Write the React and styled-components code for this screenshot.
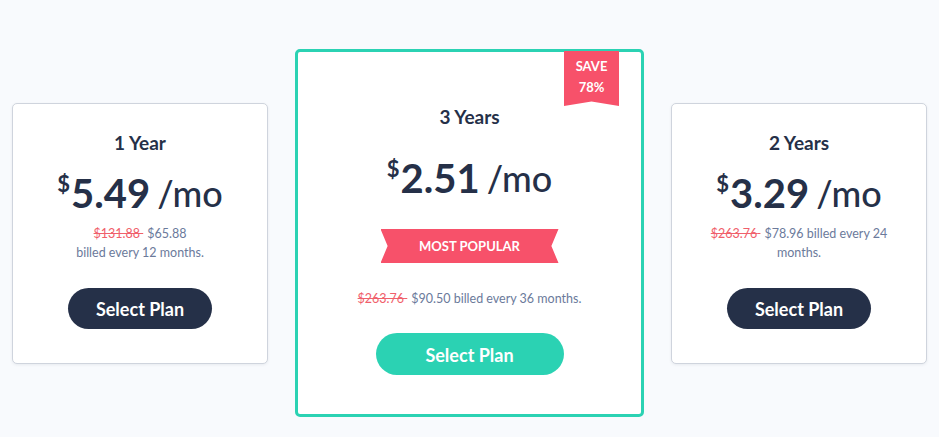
import React from "react";
import styled, { createGlobalStyle, css } from "styled-components";

const GlobalStyle = createGlobalStyle`
  html, body {
    margin: 0;
    padding: 0;
    background: #f8fafd;
  }
  body {
    font-family: Lato, "Open Sans", Arial, sans-serif;
    color: #253048;
  }
`;

const Page = styled.div`
  width: 939px;
  height: 437px;
  box-sizing: border-box;
  padding: 29px 12px 0;
  display: flex;
  align-items: center;
  justify-content: space-between;
  gap: 27px;
`;

const Card = styled.div`
  position: relative;
  box-sizing: border-box;
  background: #ffffff;
  border-radius: 5px;
  display: flex;
  flex-direction: column;
  align-items: center;
  text-align: center;

  ${({ $featured }) =>
    $featured
      ? css`
          width: 349px;
          height: 368px;
          border: 3px solid #2bd2b3;
          padding-top: 53px;
        `
      : css`
          width: 256px;
          height: 261px;
          border: 1px solid #cfd4dd;
          box-shadow: 0 1px 3px rgba(37, 48, 72, 0.08);
          padding-top: 27px;
        `}
`;

const Title = styled.h3`
  margin: 0;
  font-size: 19px;
  line-height: 24px;
  font-weight: 700;
  color: #253048;
`;

const Price = styled.div`
  display: flex;
  align-items: flex-start;
  justify-content: center;
  height: 48px;
  line-height: 48px;
  margin-top: ${({ $featured }) => ($featured ? "25px" : "14px")};
  color: #253048;
  white-space: nowrap;
`;

const Currency = styled.span`
  font-size: 22px;
  line-height: 30px;
  font-weight: 700;
  margin-right: 1px;
`;

const Amount = styled.span`
  font-size: 40px;
  font-weight: 700;
`;

const Per = styled.span`
  font-size: 36px;
  font-weight: 500;
  margin-left: 7px;
`;

const Billing = styled.p`
  margin: ${({ $featured }) => ($featured ? "26px 0 0" : "7px 0 0")};
  max-width: ${({ $featured }) => ($featured ? "none" : "190px")};
  font-size: 12.5px;
  line-height: 19px;
  color: #6b7a9b;
`;

const OldPrice = styled.s`
  color: #f0606b;
  margin-right: 4px;
`;

const SelectButton = styled.button`
  margin-top: ${({ $featured }) => ($featured ? "25px" : "26px")};
  width: ${({ $featured }) => ($featured ? "188px" : "144px")};
  height: ${({ $featured }) => ($featured ? "42px" : "41px")};
  padding: 2px 0 0;
  border: none;
  border-radius: 21px;
  background: ${({ $featured }) => ($featured ? "#2bd2b3" : "#253048")};
  color: #ffffff;
  font-family: Lato, "Open Sans", Arial, sans-serif;
  font-size: 18px;
  font-weight: 700;
  cursor: pointer;
`;

const SaveRibbon = styled.div`
  position: absolute;
  top: -1px;
  right: 22px;
  width: 55px;
  height: 55px;
  padding-top: 5px;
  box-sizing: border-box;
  background: #f7516a;
  color: #ffffff;
  font-size: 13px;
  line-height: 21px;
  font-weight: 700;
  clip-path: polygon(0 0, 100% 0, 100% 100%, 50% 92%, 0 100%);
`;

const PopularBanner = styled.div`
  margin-top: 27px;
  width: 178px;
  height: 34px;
  line-height: 34px;
  background: #f7516a;
  color: #ffffff;
  font-size: 13px;
  font-weight: 700;
  clip-path: polygon(0 0, 100% 0, 96% 50%, 100% 100%, 0 100%, 4% 50%);
`;

const plans = [
  {
    id: "1y",
    title: "1 Year",
    amount: "5.49",
    old: "$131.88",
    total: "$65.88",
    rest: "billed every 12 months.",
    breakLine: true,
  },
  {
    id: "3y",
    title: "3 Years",
    amount: "2.51",
    old: "$263.76",
    total: "$90.50",
    rest: "billed every 36 months.",
    featured: true,
  },
  {
    id: "2y",
    title: "2 Years",
    amount: "3.29",
    old: "$263.76",
    total: "$78.96",
    rest: "billed every 24 months.",
  },
];

const PlanCard = ({ plan }) => {
  const { featured } = plan;

  return (
    <Card $featured={featured}>
      {featured && (
        <SaveRibbon>
          SAVE
          <br />
          78%
        </SaveRibbon>
      )}
      <Title>{plan.title}</Title>
      <Price $featured={featured}>
        <Currency>$</Currency>
        <Amount>{plan.amount}</Amount>
        <Per>/mo</Per>
      </Price>
      {featured && <PopularBanner>MOST POPULAR</PopularBanner>}
      <Billing $featured={featured}>
        <OldPrice>{plan.old} </OldPrice>
        {plan.total}
        {plan.breakLine ? <br /> : " "}
        {plan.rest}
      </Billing>
      <SelectButton $featured={featured}>Select Plan</SelectButton>
    </Card>
  );
};

const App = () => {
  return (
    <>
      <GlobalStyle />
      <Page>
        {plans.map((plan) => (
          <PlanCard key={plan.id} plan={plan} />
        ))}
      </Page>
    </>
  );
};

export default App;
